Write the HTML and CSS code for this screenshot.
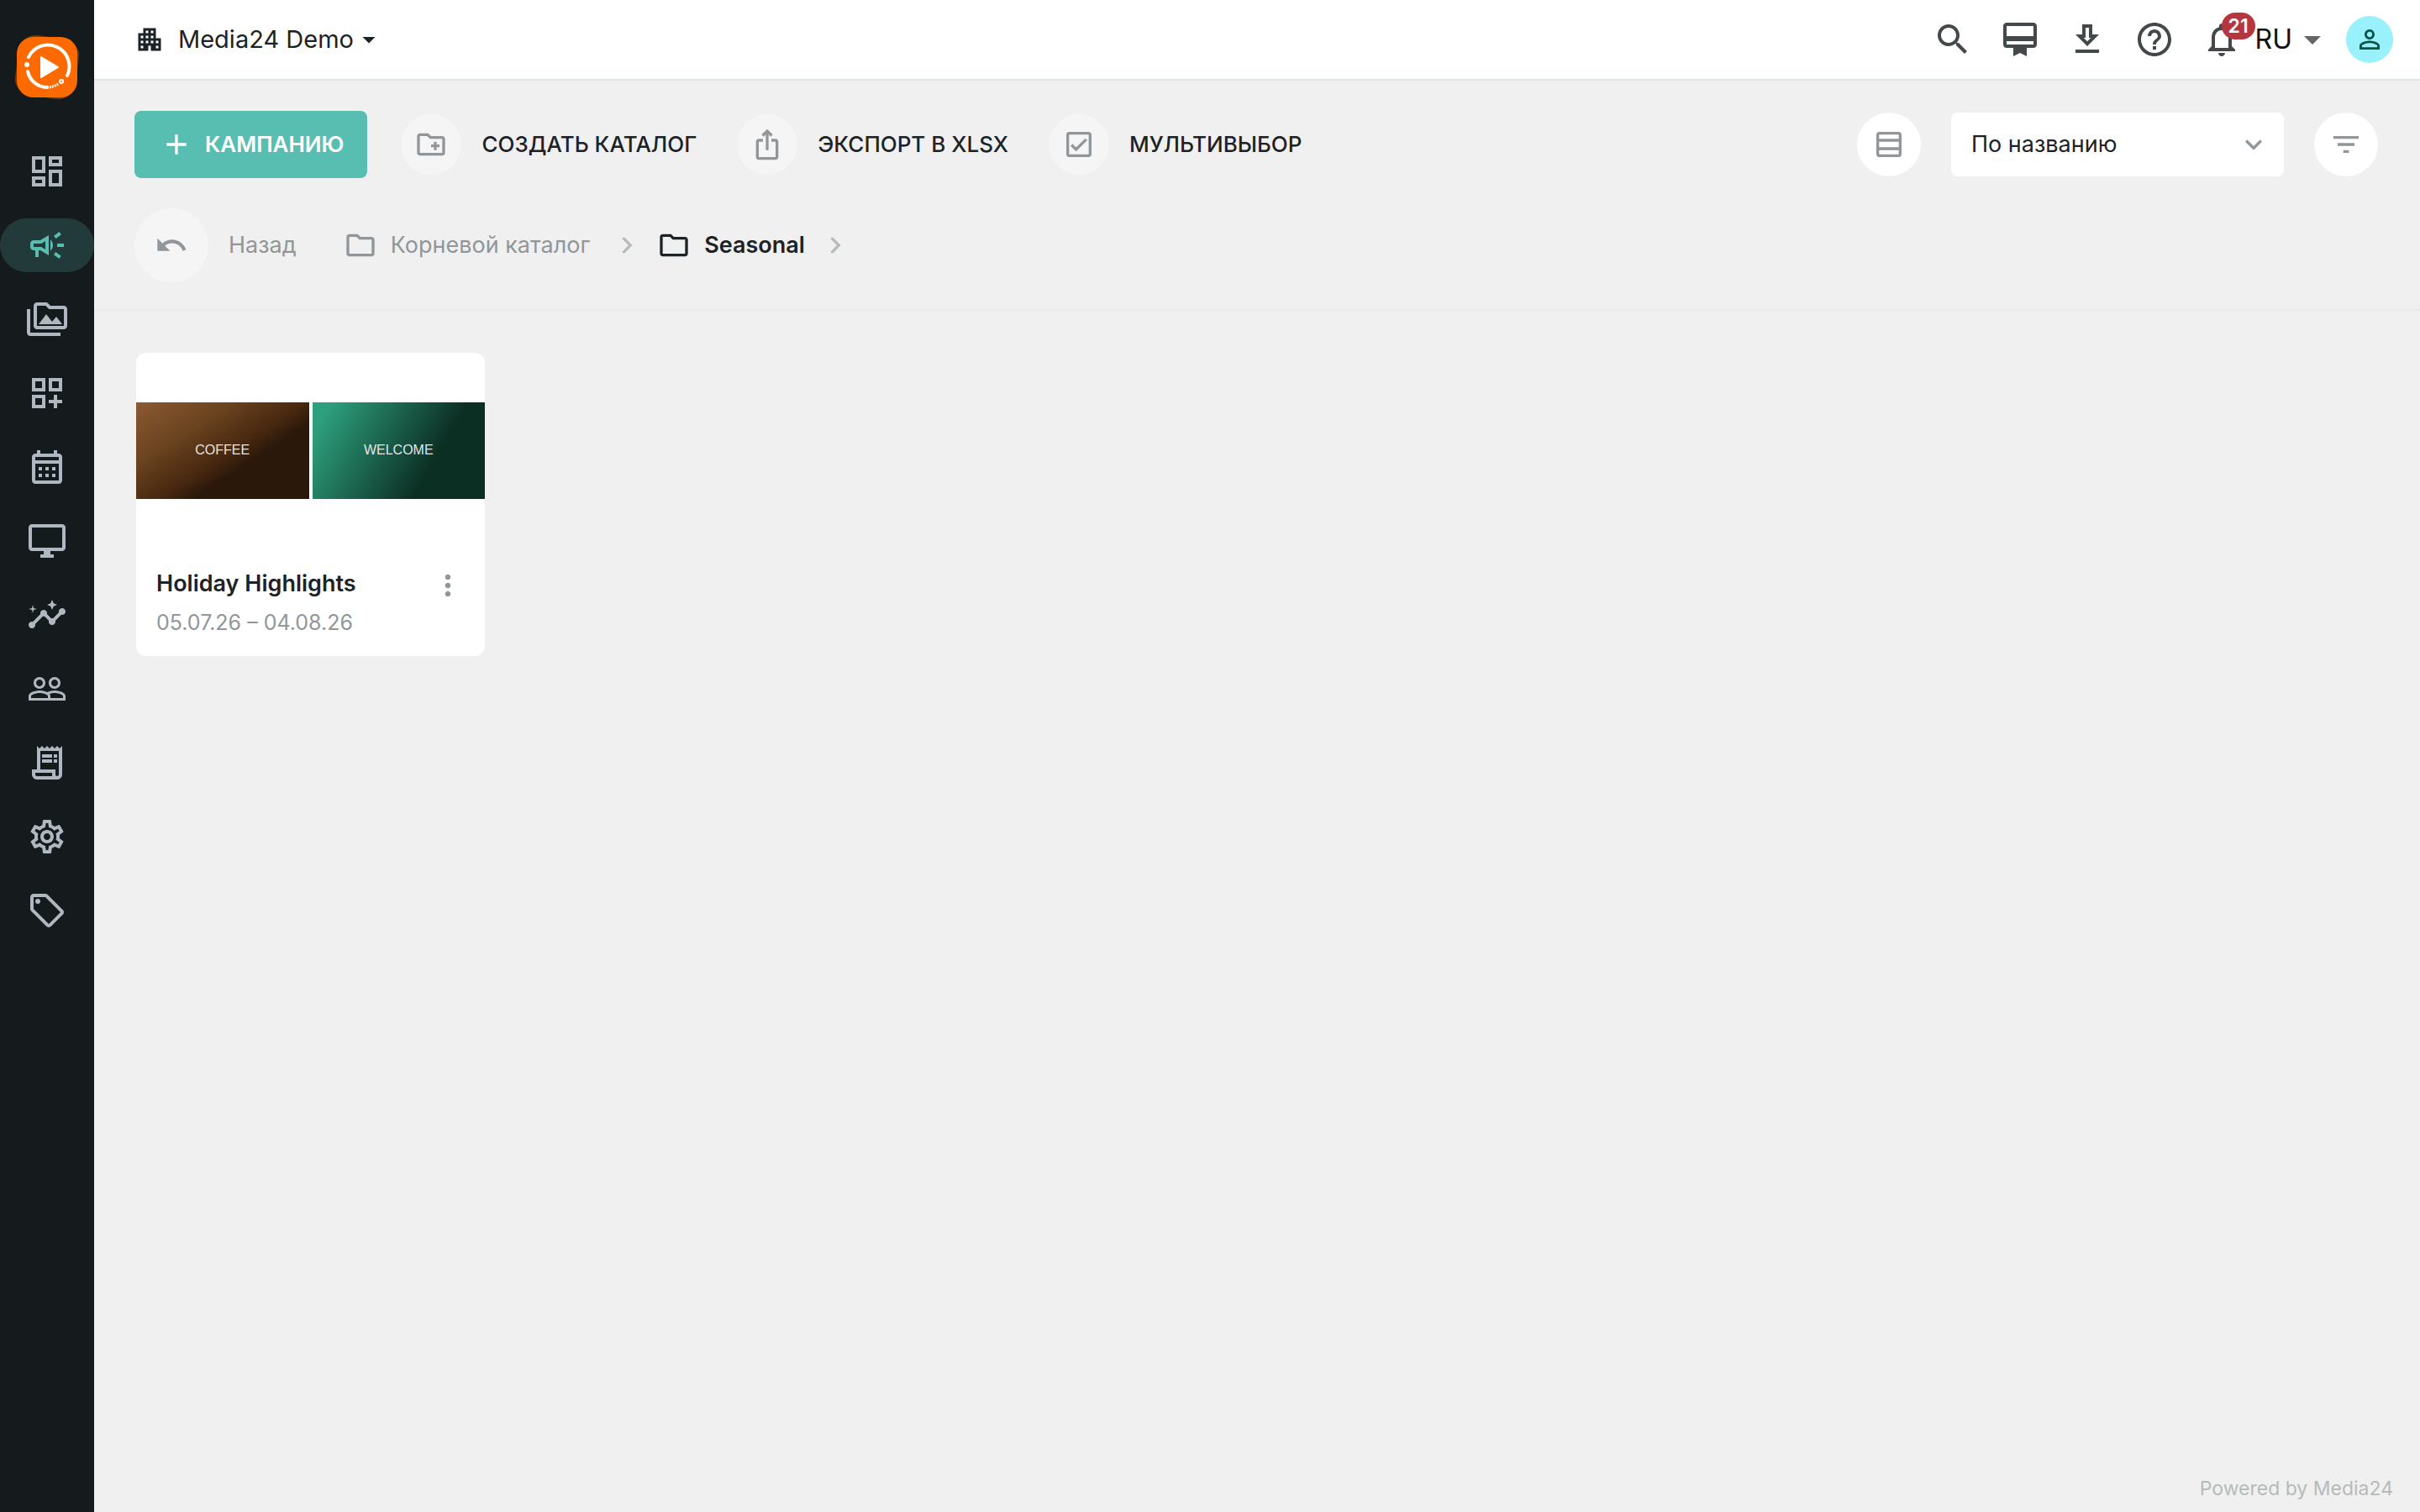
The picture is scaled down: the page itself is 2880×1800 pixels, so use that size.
FILE: index.html
```html
<!DOCTYPE html>
<html lang="ru">
<head>
  <meta charset="UTF-8" />
  <meta name="viewport" content="width=device-width, initial-scale=1.0"/>
  <title>Media24 Demo</title>
  <link rel="stylesheet" href="styles.css">
</head>
<body>

<nav class="sidebar">
  <a href="#" class="logo" aria-label="Media24">
    <svg viewBox="0 0 80 80">
      <rect x="4" y="4" width="72" height="72" rx="20" fill="#6b3914" transform="rotate(8 40 40)"/>
      <rect x="4" y="4" width="72" height="72" rx="20" fill="#ff6a00"/>
      <path d="M18 28A25 25 0 0 1 64 50" fill="none" stroke="#fff" stroke-width="4" stroke-linecap="round"/>
      <path d="M17 45A24 24 0 0 0 40 64" fill="none" stroke="#fff" stroke-width="4" stroke-linecap="round"/>
      <path d="M40 64A24 24 0 0 0 53 60" fill="none" stroke="#fff" stroke-width="3" stroke-dasharray="2 1"/>
      <circle cx="57" cy="57" r="2" fill="none" stroke="#fff" stroke-width="2"/>
      <circle cx="16" cy="37" r="3" fill="#fff"/>
      <path d="M33 28L53 40L33 52Z" fill="#fff" stroke="#fff" stroke-width="2" stroke-linejoin="round"/>
    </svg>
  </a>
  <a href="#" class="nav-item" aria-label="Панель">
    <svg viewBox="0 0 24 24"><path d="M19 5v2h-4V5h4M9 5v6H5V5h4m10 8v6h-4v-6h4M9 17v2H5v-2h4M21 3h-8v6h8V3zM11 3H3v10h8V3zm10 8h-8v10h8V11zm-10 4H3v6h8v-6z"/></svg>
  </a>
  <a href="#" class="nav-item active" aria-label="Кампании">
    <svg viewBox="0 0 24 24"><path d="M18 11v2h4v-2h-4zm-2 6.61c.96.71 2.21 1.65 3.2 2.39.4-.53.8-1.07 1.2-1.6-.99-.74-2.24-1.68-3.2-2.4-.4.54-.8 1.08-1.2 1.61zM20.4 5.6c-.4-.53-.8-1.07-1.2-1.6-.99.74-2.24 1.68-3.2 2.4.4.53.8 1.07 1.2 1.6.96-.72 2.21-1.65 3.2-2.4zM4 9c-1.1 0-2 .9-2 2v2c0 1.1.9 2 2 2h1v4h2v-4h1l5 3V6L8 9H4zm5.03 1.71L11 9.53v4.94l-1.97-1.18-.48-.29H4v-2h4.55l.48-.29zM15.5 12c0-1.33-.58-2.53-1.5-3.35v6.69c.92-.81 1.5-2.01 1.5-3.34z"/></svg>
  </a>
  <a href="#" class="nav-item" aria-label="Медиа">
    <svg viewBox="0 0 24 24"><path d="M2 6H0v14c0 1.100.9 2 2 2h18v-2H2V6zm20-2h-8l-2-2H6c-1.100 0-2 .9-2 2v12c0 1.100.9 2 2 2h16c1.100 0 2-.9 2-2V6c0-1.100-.9-2-2-2zm0 12H6V4h5.170l2 2H22v10zM7 15h14l-3.500-4.500-2.500 3.010L11.500 9z"/></svg>
  </a>
  <a href="#" class="nav-item" aria-label="Виджеты">
    <svg viewBox="0 0 24 24"><path d="M3 11h8V3H3v8zm2-6h4v4H5V5zm8-2v8h8V3h-8zm6 6h-4V5h4v4zM3 21h8v-8H3v8zm2-6h4v4H5v-4zm13-2h-2v3h-3v2h3v3h2v-3h3v-2h-3z"/></svg>
  </a>
  <a href="#" class="nav-item" aria-label="Расписание">
    <svg viewBox="0 0 24 24"><path d="M19 4h-1V2h-2v2H8V2H6v2H5c-1.110 0-1.990.9-1.990 2L3 20c0 1.100.890 2 2 2h14c1.100 0 2-.9 2-2V6c0-1.100-.9-2-2-2zm0 16H5V10h14v10zm0-12H5V6h14v2zM9 14H7v-2h2v2zm4 0h-2v-2h2v2zm4 0h-2v-2h2v2zm-8 4H7v-2h2v2zm4 0h-2v-2h2v2zm4 0h-2v-2h2v2z"/></svg>
  </a>
  <a href="#" class="nav-item" aria-label="Экраны">
    <svg viewBox="0 0 24 24"><path d="M21 2H3c-1.100 0-2 .9-2 2v12c0 1.100.9 2 2 2h7v2H8v2h8v-2h-2v-2h7c1.100 0 2-.9 2-2V4c0-1.100-.9-2-2-2zm0 14H3V4h18v12z"/></svg>
  </a>
  <a href="#" class="nav-item" aria-label="Аналитика">
    <svg viewBox="0 0 24 24"><path d="M21 8c-1.450 0-2.260 1.440-1.930 2.510l-3.550 3.560c-.3-.09-.74-.09-1.040 0l-2.550-2.550C12.270 10.450 11.460 9 10 9c-1.450 0-2.270 1.440-1.930 2.520l-4.560 4.550C2.440 15.740 1 16.550 1 18c0 1.100.9 2 2 2 1.450 0 2.260-1.440 1.930-2.510l4.550-4.560c.3.09.74.09 1.040 0l2.550 2.550C12.730 16.550 13.540 18 15 18c1.450 0 2.270-1.440 1.930-2.520l3.560-3.550C21.560 12.260 23 11.450 23 10c0-1.100-.9-2-2-2z"/><path d="M15 9l.94-2.070L18 6l-2.060-.93L15 3l-.92 2.070L12 6l2.080.93zM3.500 11L4 9l2-.5L4 8l-.5-2L3 8l-2 .5L3 9z"/></svg>
  </a>
  <a href="#" class="nav-item" aria-label="Пользователи">
    <svg viewBox="0 0 24 24"><path d="M16.500 13c-1.200 0-3.070.34-4.500 1-1.430-.67-3.300-1-4.500-1C5.330 13 1 14.080 1 16.250V19h22v-2.750c0-2.170-4.330-3.250-6.500-3.250zm-4 4.500h-10v-1.250c0-.54 2.560-1.750 5-1.750s5 1.210 5 1.750v1.250zm9 0H14v-1.250c0-.46-.2-.86-.52-1.220.88-.3 1.960-.53 3.020-.53 2.440 0 5 1.210 5 1.750v1.250zM7.500 12c1.930 0 3.500-1.570 3.500-3.500S9.430 5 7.500 5 4 6.570 4 8.500 5.570 12 7.500 12zm0-5.500c1.100 0 2 .9 2 2s-.9 2-2 2-2-.9-2-2 .9-2 2-2zm9 5.500c1.930 0 3.500-1.570 3.500-3.500S18.430 5 16.500 5 13 6.570 13 8.500s1.570 3.500 3.500 3.500zm0-5.500c1.100 0 2 .9 2 2s-.9 2-2 2-2-.9-2-2 .9-2 2-2z"/></svg>
  </a>
  <a href="#" class="nav-item" aria-label="Отчёты">
    <svg viewBox="0 0 24 24"><path d="M19.500 3.500L18 2l-1.500 1.500L15 2l-1.500 1.500L12 2l-1.500 1.500L9 2 7.500 3.500 6 2v14H3v3c0 1.660 1.340 3 3 3h12c1.660 0 3-1.340 3-3V2l-1.500 1.500zM15 20H6c-.55 0-1-.45-1-1v-1h10v2zm4-1c0 .55-.45 1-1 1s-1-.45-1-1v-3H8V5h11v14z"/><path d="M9 7h6v2H9zm7 0h2v2h-2zM9 10h6v2H9zm7 0h2v2h-2z"/></svg>
  </a>
  <a href="#" class="nav-item" aria-label="Настройки">
    <svg viewBox="0 0 24 24"><path d="M19.430 12.980c.04-.32.07-.64.07-.98 0-.34-.03-.66-.07-.98l2.110-1.650c.19-.15.24-.42.12-.64l-2-3.460c-.09-.16-.26-.25-.44-.25-.06 0-.12.010-.17.030l-2.490 1c-.52-.4-1.080-.73-1.690-.98l-.38-2.650C14.460 2.180 14.250 2 14 2h-4c-.25 0-.46.18-.49.42l-.38 2.650c-.61.25-1.170.59-1.690.98l-2.490-1c-.06-.02-.12-.03-.18-.03-.17 0-.34.09-.43.25l-2 3.460c-.13.22-.07.49.12.64l2.110 1.650c-.04.32-.07.65-.07.98 0 .33.03.66.07.98l-2.110 1.650c-.19.15-.24.42-.12.64l2 3.460c.09.16.26.25.44.25.06 0 .12-.01.17-.03l2.490-1c.52.4 1.080.73 1.690.98l.38 2.650c.03.24.24.42.49.42h4c.25 0 .46-.18.49-.42l.38-2.650c.61-.25 1.170-.59 1.690-.98l2.490 1c.06.02.12.03.18.03.17 0 .34-.09.43-.25l2-3.460c.12-.22.07-.49-.12-.64l-2.110-1.650zm-1.980-1.710c.04.31.05.52.05.73 0 .21-.02.43-.05.73l-.14 1.130.89.7 1.080.84-.7 1.210-1.270-.51-1.040-.42-.9.680c-.43.32-.84.56-1.250.73l-1.060.43-.16 1.130-.2 1.350h-1.400l-.19-1.350-.16-1.130-1.060-.43c-.43-.18-.83-.41-1.230-.71l-.91-.7-1.060.43-1.270.51-.7-1.210 1.080-.84.89-.7-.14-1.130c-.03-.31-.05-.54-.05-.74s.02-.43.05-.73l.14-1.130-.89-.7-1.080-.84.7-1.210 1.270.51 1.040.42.9-.68c.43-.32.84-.56 1.250-.73l1.060-.43.16-1.130.2-1.350h1.390l.19 1.350.16 1.130 1.060.43c.43.18.83.41 1.230.71l.91.7 1.060-.43 1.270-.51.7 1.210-1.070.85-.89.7.14 1.130zM12 8c-2.210 0-4 1.790-4 4s1.790 4 4 4 4-1.790 4-4-1.790-4-4-4zm0 6c-1.100 0-2-.9-2-2s.9-2 2-2 2 .9 2 2-.9 2-2 2z"/></svg>
  </a>
  <a href="#" class="nav-item" aria-label="Теги">
    <svg viewBox="0 0 24 24"><path d="M21.410 11.580l-9-9C12.050 2.220 11.550 2 11 2H4c-1.100 0-2 .9-2 2v7c0 .55.22 1.050.59 1.420l9 9c.36.36.86.58 1.410.58s1.050-.22 1.410-.59l7-7c.37-.36.59-.86.59-1.410s-.23-1.060-.59-1.420zM13 20.010L4 11V4h7v-.01l9 9-7 7.020z"/><circle cx="6.500" cy="6.500" r="1.500"/></svg>
  </a>
</nav>

<div class="page">
  <header class="topbar">
    <button class="company">
      <svg class="icon-sm" viewBox="0 0 24 24"><path d="M17 11V3H7v4H3v14h8v-4h2v4h8V11h-4zM7 19H5v-2h2v2zm0-4H5v-2h2v2zm0-4H5V9h2v2zm4 4H9v-2h2v2zm0-4H9V9h2v2zm0-4H9V5h2v2zm4 8h-2v-2h2v2zm0-4h-2V9h2v2zm0-4h-2V5h2v2zm4 12h-2v-2h2v2zm0-4h-2v-2h2v2z"/></svg>
      <span>Media24 Demo</span>
      <svg class="icon-sm caret" viewBox="0 0 24 24"><path d="M7 10l5 5 5-5z"/></svg>
    </button>
    <div class="top-actions">
      <button class="top-btn" aria-label="Поиск"><svg viewBox="0 0 24 24"><path d="M15.500 14h-.79l-.28-.27C15.410 12.590 16 11.110 16 9.500 16 5.910 13.090 3 9.500 3S3 5.910 3 9.500 5.910 16 9.500 16c1.610 0 3.090-.59 4.230-1.570l.27.28v.79l5 4.990L20.490 19l-4.990-5zm-6 0C7.010 14 5 11.990 5 9.500S7.010 5 9.500 5 14 7.010 14 9.500 11.990 14 9.500 14z"/></svg></button>
      <button class="top-btn" aria-label="Тариф"><svg viewBox="0 0 24 24"><path d="M20 2H4c-1.110 0-2 .89-2 2v11c0 1.110.89 2 2 2h4v5l4-2 4 2v-5h4c1.110 0 2-.89 2-2V4c0-1.110-.89-2-2-2zm0 13H4v-2h16v2zm0-5H4V4h16v6z"/></svg></button>
      <button class="top-btn" aria-label="Скачать"><svg viewBox="0 0 24 24"><path d="M19 9h-4V3H9v6H5l7 7 7-7zm-8 2V5h2v6h1.170L12 13.170 9.830 11H11zm-6 7h14v2H5z"/></svg></button>
      <button class="top-btn" aria-label="Справка"><svg viewBox="0 0 24 24"><path d="M11 18h2v-2h-2v2zm1-16C6.480 2 2 6.480 2 12s4.480 10 10 10 10-4.480 10-10S17.520 2 12 2zm0 18c-4.410 0-8-3.590-8-8s3.590-8 8-8 8 3.590 8 8-3.590 8-8 8zm0-14c-2.210 0-4 1.790-4 4h2c0-1.100.9-2 2-2s2 .9 2 2c0 2-3 1.750-3 5h2c0-2.250 3-2.500 3-5 0-2.210-1.790-4-4-4z"/></svg></button>
      <button class="top-btn bell" aria-label="Уведомления"><svg viewBox="0 0 24 24"><path d="M12 22c1.100 0 2-.9 2-2h-4c0 1.100.89 2 2 2zm6-6v-5c0-3.070-1.640-5.640-4.500-6.320V4c0-.83-.67-1.500-1.500-1.500s-1.500.67-1.500 1.500v.68C7.630 5.360 6 7.920 6 11v5l-2 2v1h16v-1l-2-2zm-2 1H8v-6c0-2.480 1.510-4.500 4-4.500s4 2.020 4 4.500v6z"/></svg><span class="badge">21</span></button>
      <button class="lang">RU<svg viewBox="0 0 24 24"><path d="M7 10l5 5 5-5z"/></svg></button>
      <button class="avatar" aria-label="Профиль"><svg class="icon-sm" viewBox="0 0 24 24"><path d="M12 5.900c1.160 0 2.100.94 2.100 2.100s-.94 2.100-2.100 2.100S9.900 9.160 9.900 8s.94-2.100 2.100-2.100m0 9c2.970 0 6.100 1.460 6.100 2.100v1.100H5.900V17c0-.64 3.130-2.100 6.100-2.100M12 4C9.790 4 8 5.790 8 8s1.790 4 4 4 4-1.790 4-4-1.790-4-4-4zm0 9c-2.670 0-8 1.340-8 4v3h16v-3c0-2.660-5.330-4-8-4z"/></svg></button>
    </div>
  </header>

  <div class="controls">
    <div class="toolbar">
      <button class="primary">
        <svg viewBox="0 0 24 24"><path d="M19 13h-6v6h-2v-6H5v-2h6V5h2v6h6v2z"/></svg>
        КАМПАНИЮ
      </button>
      <button class="tool">
        <span class="tool-icon"><svg viewBox="0 0 24 24"><path d="M20 6h-8l-2-2H4c-1.110 0-1.990.89-1.990 2L2 18c0 1.110.89 2 2 2h16c1.110 0 2-.89 2-2V8c0-1.110-.89-2-2-2zm0 12H4V6h5.170l2 2H20v10zm-8-4h2v2h2v-2h2v-2h-2v-2h-2v2h-2z"/></svg></span>
        СОЗДАТЬ КАТАЛОГ
      </button>
      <button class="tool">
        <span class="tool-icon"><svg viewBox="0 0 24 24"><path d="M16 5l-1.420 1.420-1.590-1.590V16h-1.980V4.830L9.420 6.420 8 5l4-4 4 4zm4 5v11c0 1.100-.9 2-2 2H6c-1.110 0-2-.9-2-2V10c0-1.110.89-2 2-2h3v2H6v11h12V10h-3V8h3c1.100 0 2 .89 2 2z"/></svg></span>
        ЭКСПОРТ В XLSX
      </button>
      <button class="tool">
        <span class="tool-icon"><svg viewBox="0 0 24 24"><path d="M19 3H5c-1.100 0-2 .9-2 2v14c0 1.100.9 2 2 2h14c1.100 0 2-.9 2-2V5c0-1.100-.9-2-2-2zm0 16H5V5h14v14zM17.990 9l-1.410-1.420-6.590 6.590-2.580-2.570-1.420 1.410 4 3.990z"/></svg></span>
        МУЛЬТИВЫБОР
      </button>
      <div class="view-options">
        <button class="round" aria-label="Вид"><svg viewBox="0 0 24 24"><path d="M19 3H5c-1.100 0-2 .9-2 2v14c0 1.100.9 2 2 2h14c1.100 0 2-.9 2-2V5c0-1.100-.9-2-2-2zm0 2v3H5V5h14zm0 5v4H5v-4h14zM5 19v-3h14v3H5z"/></svg></button>
        <div class="sort">
          <select aria-label="Сортировка">
            <option>По названию</option>
            <option>По дате</option>
          </select>
          <svg viewBox="0 0 24 24"><path d="M16.590 8.590L12 13.170 7.410 8.590 6 10l6 6 6-6z"/></svg>
        </div>
        <button class="round" aria-label="Фильтр"><svg viewBox="0 0 24 24"><path d="M10 18h4v-2h-4v2zM3 6v2h18V6H3zm3 7h12v-2H6v2z"/></svg></button>
      </div>
    </div>

    <div class="breadcrumbs">
      <a href="#" class="back">
        <span class="back-icon"><svg viewBox="0 0 24 24"><path d="M12.500 8c-2.650 0-5.050.99-6.900 2.600L2 7v9h9l-3.620-3.620c1.390-1.160 3.160-1.880 5.120-1.880 3.540 0 6.550 2.310 7.600 5.500l2.370-.78C21.080 11.030 17.150 8 12.500 8z"/></svg></span>
        Назад
      </a>
      <a href="#" class="crumb">
        <svg viewBox="0 0 24 24"><path d="M9.170 6l2 2H20v10H4V6h5.170M10 4H4c-1.100 0-1.990.9-1.990 2L2 18c0 1.100.9 2 2 2h16c1.100 0 2-.9 2-2V8c0-1.100-.9-2-2-2h-8l-2-2z"/></svg>
        Корневой каталог
      </a>
      <svg class="sep" viewBox="0 0 24 24"><path d="M10 6L8.590 7.410 13.170 12l-4.580 4.590L10 18l6-6z"/></svg>
      <a href="#" class="crumb current">
        <svg viewBox="0 0 24 24"><path d="M9.170 6l2 2H20v10H4V6h5.170M10 4H4c-1.100 0-1.990.9-1.990 2L2 18c0 1.100.9 2 2 2h16c1.100 0 2-.9 2-2V8c0-1.100-.9-2-2-2h-8l-2-2z"/></svg>
        Seasonal
      </a>
      <svg class="sep" viewBox="0 0 24 24"><path d="M10 6L8.590 7.410 13.170 12l-4.580 4.590L10 18l6-6z"/></svg>
    </div>
  </div>

  <main class="grid">
    <article class="card">
      <div class="preview">
        <div class="thumb coffee">COFFEE</div>
        <div class="thumb welcome">WELCOME</div>
      </div>
      <div class="card-body">
        <div class="card-text">
          <h3>Holiday Highlights</h3>
          <p>05.07.26 – 04.08.26</p>
        </div>
        <button class="more" aria-label="Меню"><svg viewBox="0 0 24 24"><path d="M12 8c1.100 0 2-.9 2-2s-.9-2-2-2-2 .9-2 2 .9 2 2 2zm0 2c-1.100 0-2 .9-2 2s.9 2 2 2 2-.9 2-2-.9-2-2-2zm0 6c-1.100 0-2 .9-2 2s.9 2 2 2 2-.9 2-2-.9-2-2-2z"/></svg></button>
      </div>
    </article>
  </main>

  <footer>Powered by Media24</footer>
</div>

</body>
</html>
```
FILE: styles.css
```css
* {
  box-sizing: border-box;
}
body {
  font-family: Inter, "Noto Sans", sans-serif;
  font-size: 27px;
  line-height: 36px;
  color: #1c2327;
  background-color: #f0f0f0;
  margin: 0;
  display: flex;
  min-height: 100vh;
}
button, select {
  font: inherit;
  color: inherit;
  background: none;
  border: none;
  padding: 0;
  cursor: pointer;
}
a {
  color: inherit;
  text-decoration: none;
}
svg {
  display: block;
  flex: none;
  width: 40px;
  height: 40px;
  fill: currentColor;
}
.icon-sm {
  width: 36px;
  height: 36px;
}

/* sidebar */
.sidebar {
  flex: none;
  width: 112px;
  background-color: #151a1d;
  color: #afb8c1;
  display: flex;
  flex-direction: column;
  align-items: center;
  gap: 24px;
  padding-top: 40px;
}
.logo {
  margin-bottom: 28px;
}
.logo svg {
  width: 80px;
  height: 80px;
}
.nav-item {
  width: 112px;
  height: 64px;
  border-radius: 32px;
  display: flex;
  align-items: center;
  justify-content: center;
}
.nav-item svg {
  width: 48px;
  height: 48px;
}
.nav-item.active {
  background-color: #223b3a;
  color: #57beb1;
}

/* top bar */
.page {
  flex: 1;
  display: flex;
  flex-direction: column;
  min-width: 0;
}
.topbar {
  height: 96px;
  background-color: #fff;
  border-bottom: 2px solid #dfe6e4;
  display: flex;
  align-items: center;
  justify-content: space-between;
  padding: 0 32px 0 48px;
}
.company {
  display: flex;
  align-items: center;
  gap: 16px;
  font-size: 29px;
}
.company .caret {
  margin-left: -16px;
}
.top-actions {
  display: flex;
  align-items: center;
  color: #43494a;
}
.top-btn {
  margin-right: 32px;
}
.top-btn svg, .lang svg {
  width: 48px;
  height: 48px;
}
.bell {
  position: relative;
  margin-right: 16px;
}
.badge {
  position: absolute;
  top: -8px;
  left: 24px;
  height: 32px;
  width: 40px;
  border-radius: 16px;
  background-color: #b5363f;
  color: #fff;
  font-size: 23px;
  font-weight: 600;
  line-height: 32px;
}
.lang {
  display: flex;
  align-items: center;
  font-size: 32px;
  color: #111;
  margin-right: 16px;
}
.lang svg {
  color: #616665;
}
.avatar {
  width: 56px;
  height: 56px;
  border-radius: 50%;
  background-color: #99f2fb;
  color: #07544a;
  display: flex;
  align-items: center;
  justify-content: center;
}

/* toolbar and breadcrumbs */
.controls {
  padding: 36px 50px 32px 48px;
  border-bottom: 2px solid #e8e8e8;
}
.toolbar {
  display: flex;
  align-items: center;
  font-size: 26px;
  font-weight: 500;
}
.primary {
  height: 80px;
  padding: 0 28px 0 30px;
  border-radius: 8px;
  background-color: #57beb1;
  color: #fff;
  font-weight: 600;
  display: flex;
  align-items: center;
  gap: 14px;
  margin-right: 40px;
}
.tool {
  display: flex;
  align-items: center;
  gap: 24px;
  margin-right: 48px;
}
.tool-icon, .back-icon {
  width: 72px;
  height: 72px;
  border-radius: 50%;
  background-color: #f5f5f5;
  color: #909699;
  display: flex;
  align-items: center;
  justify-content: center;
}
.view-options {
  margin-left: auto;
  display: flex;
  gap: 36px;
  color: #909699;
}
.round {
  width: 76px;
  height: 76px;
  border-radius: 50%;
  background-color: #fff;
  display: flex;
  align-items: center;
  justify-content: center;
}
.sort {
  position: relative;
}
.sort select {
  appearance: none;
  width: 396px;
  height: 76px;
  padding: 0 64px 0 24px;
  border-radius: 8px;
  background-color: #fff;
  color: #1c2327;
  font-size: 27px;
  font-weight: 400;
}
.sort svg {
  position: absolute;
  right: 16px;
  top: 18px;
  pointer-events: none;
}
.breadcrumbs {
  display: flex;
  align-items: center;
  margin-top: 36px;
  color: #909699;
}
.back {
  display: flex;
  align-items: center;
  gap: 24px;
  margin-right: 56px;
}
.back-icon {
  width: 88px;
  height: 88px;
}
.crumb {
  display: flex;
  align-items: center;
  gap: 16px;
}
.current {
  color: #1c2327;
  font-weight: 600;
}
.sep {
  color: #b5babb;
  margin: 0 16px 0 24px;
}
.current + .sep {
  margin-left: 16px;
}

/* campaigns */
.grid {
  flex: 1;
  display: grid;
  grid-template-columns: repeat(auto-fill, 415px);
  align-content: start;
  gap: 48px;
  padding: 50px;
}
.card {
  background-color: #fff;
  border-radius: 12px;
  overflow: hidden;
}
.preview {
  display: flex;
  align-items: center;
  gap: 4px;
  height: 232px;
}
.thumb {
  flex: 1;
  height: 115px;
  display: flex;
  align-items: center;
  justify-content: center;
  font-family: "Liberation Sans", Arial, sans-serif;
  font-size: 16px;
  line-height: 20px;
  color: #e5e5e5;
}
.coffee {
  background: linear-gradient(147deg, #8b5a33, #6a431f 30%, #45260f 54%, #2a180b 64%);
}
.welcome {
  background: linear-gradient(120deg, #2d9f7c 8%, #0c2f24 68%);
}
.card-body {
  display: flex;
  justify-content: space-between;
  align-items: flex-start;
  padding: 25px 24px 22px;
}
.card h3 {
  margin: 0;
  font-size: 27px;
  font-weight: 600;
}
.card p {
  margin: 10px 0 0;
  font-size: 25px;
  color: #909699;
}
.more {
  color: #909699;
}
footer {
  padding: 0 32px 10px;
  text-align: right;
  font-size: 23px;
  color: #b5babb;
}
```
